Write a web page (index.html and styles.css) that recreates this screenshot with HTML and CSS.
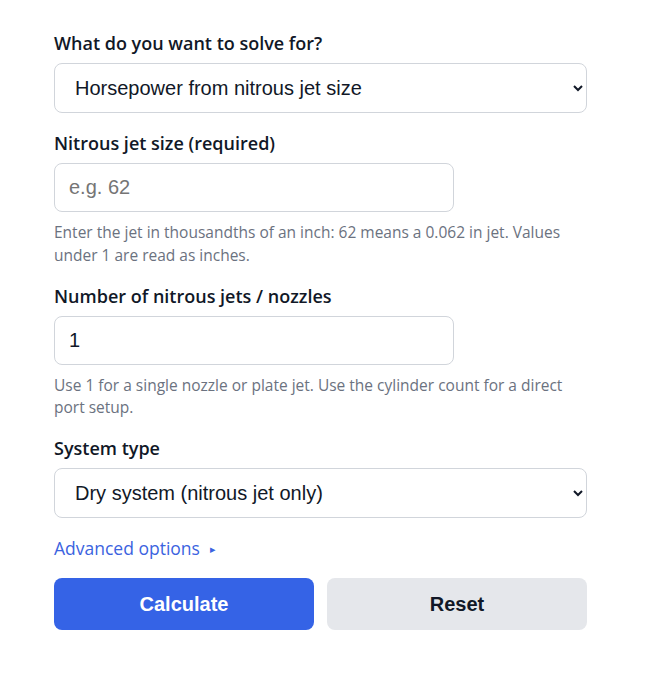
FILE: index.html
```html
<!DOCTYPE html>
<html>
<head>
    <title>Nitrous Horsepower Calculator</title>
<link rel="stylesheet" href="styles.css">
</head>
<body>
    <form class="calc">
        <div class="field">
            <label for="solveFor">What do you want to solve for?</label>
            <select id="solveFor" class="wide">
                <option>Horsepower from nitrous jet size</option>
                <option>Jet size from target horsepower</option>
            </select>
        </div>

        <div class="field">
            <label for="jetSize">Nitrous jet size (required)</label>
            <input type="text" id="jetSize" placeholder="e.g. 62">
            <p class="help">Enter the jet in thousandths of an inch: 62 means a 0.062 in jet. Values under 1 are read as inches.</p>
        </div>

        <div class="field">
            <label for="jetCount">Number of nitrous jets / nozzles</label>
            <input type="text" id="jetCount" value="1">
            <p class="help">Use 1 for a single nozzle or plate jet. Use the cylinder count for a direct port setup.</p>
        </div>

        <div class="field">
            <label for="systemType">System type</label>
            <select id="systemType" class="wide">
                <option>Dry system (nitrous jet only)</option>
                <option>Wet system (nitrous and fuel jet)</option>
            </select>
        </div>

        <div class="advanced">Advanced options <span class="arrow">&#9656;</span></div>

        <div class="actions">
            <button type="button" class="primary">Calculate</button>
            <button type="reset" class="secondary">Reset</button>
        </div>
    </form>
</body>
</html>
```

FILE: styles.css
```css
body {
    font-family: 'Open Sans', sans-serif;
    background-color: #fff;
    color: #111827;
    margin: 0;
    padding: 0;
}

.calc {
    width: 533px;
    padding: 31px 0 0 54px;
}

.field {
    margin-bottom: 18px;
}

label {
    display: block;
    font-size: 18px;
    font-weight: 600;
    line-height: 25px;
    margin-bottom: 7px;
    color: #111827;
}

input[type="text"],
select {
    display: block;
    box-sizing: border-box;
    font-family: 'Liberation Sans', Arial, sans-serif;
    font-size: 20px;
    color: #111827;
    background-color: #fff;
    border: 1px solid #d1d5db;
    border-radius: 8px;
    padding: 0 14px;
    height: 49px;
    width: 400px;
}

select.wide {
    width: 533px;
    height: 50px;
    padding-left: 16px;
}

input::placeholder {
    color: #757575;
}

.help {
    font-size: 15.5px;
    line-height: 22.5px;
    color: #6b7280;
    margin: 9px 0 -0.5px;
}

.advanced {
    font-size: 17.5px;
    line-height: 25px;
    color: #3b63e0;
    margin-top: 18px;
    margin-bottom: 17px;
}

.advanced .arrow {
    font-size: 11px;
    margin-left: 6px;
    vertical-align: 2px;
}

.actions {
    display: flex;
    gap: 13px;
}

.actions button {
    flex: 1;
    height: 52px;
    border: none;
    border-radius: 8px;
    font-family: 'Liberation Sans', Arial, sans-serif;
    font-size: 20px;
    font-weight: bold;
    cursor: pointer;
}

.primary {
    background-color: #3563e6;
    color: #fff;
}

.secondary {
    background-color: #e5e7eb;
    color: #111827;
}
```
